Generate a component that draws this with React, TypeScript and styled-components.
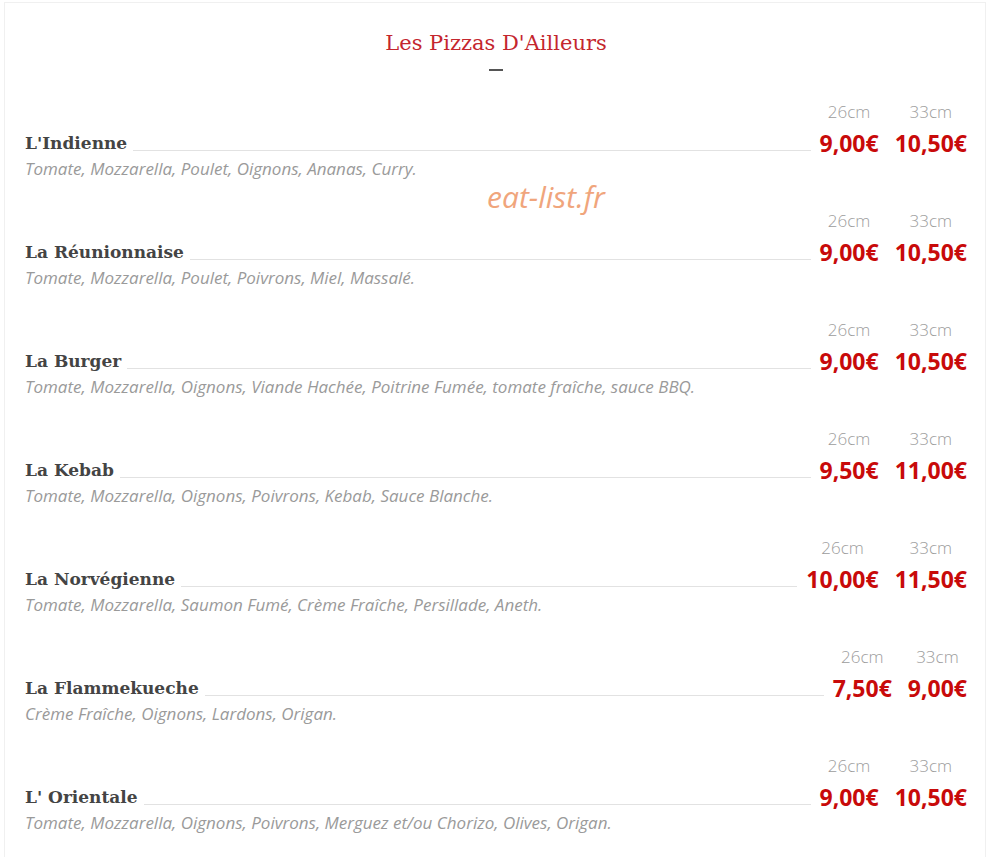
import styled, { createGlobalStyle } from "styled-components"

type Pizza = {
  name: string
  description: string
  prices: [string, string]
}

const pizzas: Pizza[] = [
  {
    name: "L'Indienne",
    description: "Tomate, Mozzarella, Poulet, Oignons, Ananas, Curry.",
    prices: ["9,00€", "10,50€"],
  },
  {
    name: "La Réunionnaise",
    description: "Tomate, Mozzarella, Poulet, Poivrons, Miel, Massalé.",
    prices: ["9,00€", "10,50€"],
  },
  {
    name: "La Burger",
    description:
      "Tomate, Mozzarella, Oignons, Viande Hachée, Poitrine Fumée, tomate fraîche, sauce BBQ.",
    prices: ["9,00€", "10,50€"],
  },
  {
    name: "La Kebab",
    description: "Tomate, Mozzarella, Oignons, Poivrons, Kebab, Sauce Blanche.",
    prices: ["9,50€", "11,00€"],
  },
  {
    name: "La Norvégienne",
    description: "Tomate, Mozzarella, Saumon Fumé, Crème Fraîche, Persillade, Aneth.",
    prices: ["10,00€", "11,50€"],
  },
  {
    name: "La Flammekueche",
    description: "Crème Fraîche, Oignons, Lardons, Origan.",
    prices: ["7,50€", "9,00€"],
  },
  {
    name: "L' Orientale",
    description:
      "Tomate, Mozzarella, Oignons, Poivrons, Merguez et/ou Chorizo, Olives, Origan.",
    prices: ["9,00€", "10,50€"],
  },
]

const sizes = ["26cm", "33cm"]

export default function App() {
  return (
    <>
      <GlobalStyle />
      <MenuCard>
        <MenuTitle>Les Pizzas D'Ailleurs</MenuTitle>
        <TitleDash />

        <MenuList>
          {pizzas.map((pizza) => (
            <MenuItem key={pizza.name}>
              <span />
              {sizes.map((size) => (
                <SizeLabel key={size}>{size}</SizeLabel>
              ))}

              <NameCell>
                <PizzaName>{pizza.name}</PizzaName>
                <Leader />
              </NameCell>
              {pizza.prices.map((price, i) => (
                <Price key={i}>{price}</Price>
              ))}

              <Description>{pizza.description}</Description>
            </MenuItem>
          ))}
        </MenuList>

        <Watermark>eat-list.fr</Watermark>
      </MenuCard>
    </>
  )
}

const GlobalStyle = createGlobalStyle`
  html, body {
    margin: 0;
    background: #ffffff;
    font-family: "Open Sans", "Liberation Sans", sans-serif;
  }
`

const MenuCard = styled.div`
  position: relative;
  margin: 2px 3px 0 4px;
  min-height: 860px;
  padding: 25px 18px 0 20px;
  border: 1px solid #f0f0f0;
  border-bottom: none;
  background: #ffffff;
`

const MenuTitle = styled.h2`
  margin: 0;
  text-align: center;
  font-family: "DejaVu Serif", serif;
  font-weight: normal;
  font-size: 21px;
  line-height: 30px;
  color: #c4262e;
`

const TitleDash = styled.div`
  width: 14px;
  height: 2px;
  margin: 11px auto 0;
  background: #555555;
`

const MenuList = styled.div`
  display: flex;
  flex-direction: column;
  gap: 29px;
  margin-top: 31px;
`

const MenuItem = styled.div`
  display: grid;
  grid-template-columns: 1fr auto auto;
  grid-template-rows: 20px 34px 26px;
  column-gap: 16px;
  align-items: end;
`

const SizeLabel = styled.span`
  align-self: center;
  justify-self: center;
  font-weight: 300;
  font-size: 17px;
  line-height: 20px;
  color: #9c9c9c;
`

const NameCell = styled.div`
  display: flex;
  align-items: center;
  height: 26px;
  margin-right: -7px;
`

const PizzaName = styled.span`
  font-family: "DejaVu Serif", serif;
  font-weight: bold;
  font-size: 17px;
  line-height: 26px;
  color: #444444;
  white-space: nowrap;
`

const Leader = styled.span`
  flex: 1;
  align-self: flex-end;
  height: 1px;
  margin: 0 0 5px 6px;
  background: #e2e2e2;
`

const Price = styled.span`
  font-weight: 700;
  font-size: 23px;
  line-height: 26px;
  color: #c80a0a;
  white-space: nowrap;
`

const Description = styled.p`
  grid-column: 1 / -1;
  align-self: center;
  margin: 0;
  font-style: italic;
  font-size: 17px;
  line-height: 26px;
  color: #9a9a9a;
`

const Watermark = styled.span`
  position: absolute;
  left: 482px;
  top: 174px;
  font-style: italic;
  font-size: 30px;
  line-height: 40px;
  color: #f0a57c;
`
